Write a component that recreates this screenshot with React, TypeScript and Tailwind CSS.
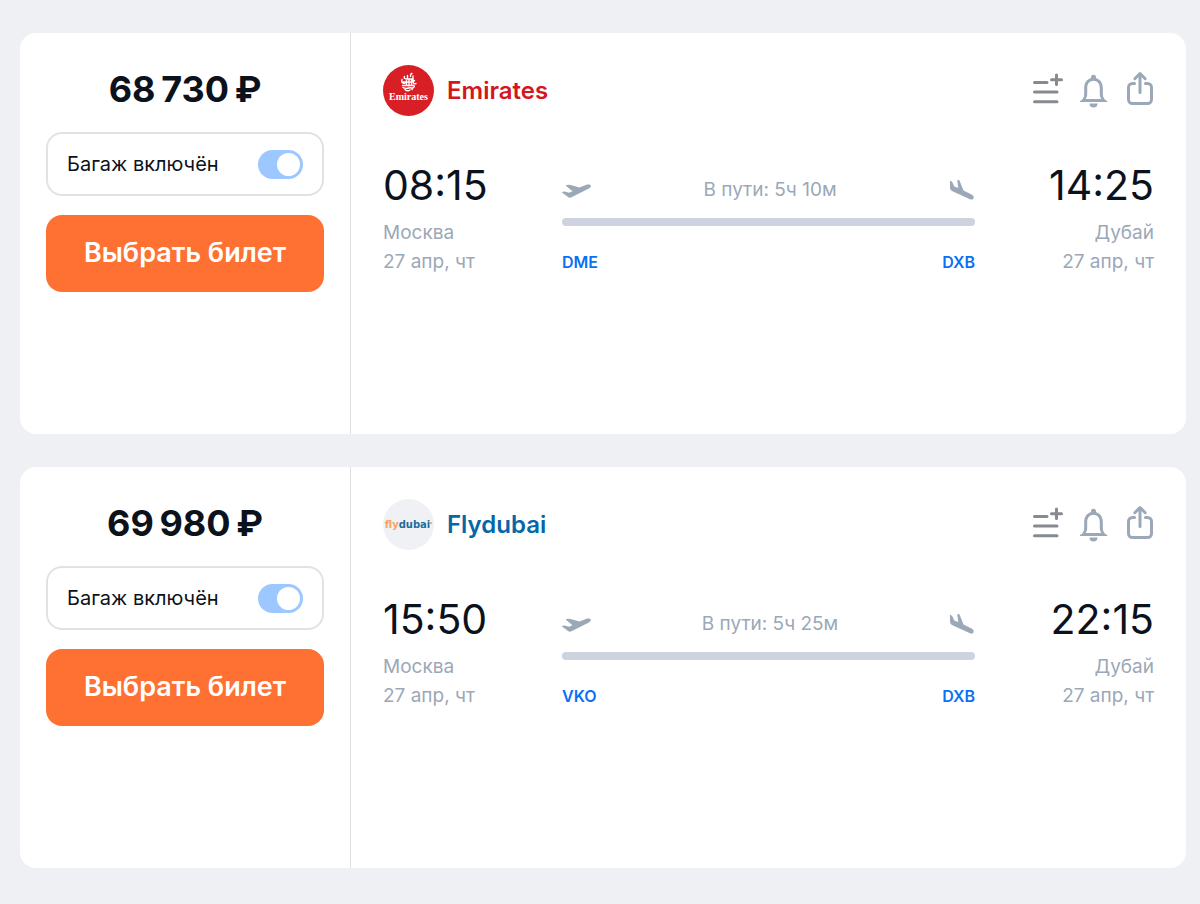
import type { ReactNode } from "react";

type Ticket = {
  id: string;
  price: string;
  airline: string;
  airlineClass: string;
  logo: ReactNode;
  duration: string;
  from: { time: string; city: string; date: string; code: string };
  to: { time: string; city: string; date: string; code: string };
};

function EmiratesLogo() {
  return (
    <span className="flex size-[51px] flex-col items-center justify-center rounded-full bg-[#d91f26] text-white">
      <svg className="h-[21px] w-5" viewBox="0 0 20 21" fill="none" stroke="currentColor" strokeWidth="1.4" strokeLinecap="round" aria-hidden="true">
        <path d="M13 2.500c-1.500 0-1.500 1.500-1.500 3M8.500 4.500v3.500M5.500 5.500c-1 2 .5 2.500 3 2.500h4.500M14 5v4c0 1.500-1.500 2-3 2H4M3 8.500c-1 3 1 4.500 3 3.500M7.500 9.500v5M10 9v6M12.500 9v5.500M15.500 9.500c-2 1.500-1.500 4 1.500 3M3.500 14.500h10.500c2 0 1.500 2-.5 2.500M4 16.500c2 1.500 4 1 6 .5s4 0 3 1.500M6 18.500c1.500 1.500 3.500 1.500 5 .5" />
      </svg>
      <span className="font-['Liberation_Serif',serif] text-[10px] font-bold leading-[10px]">Emirates</span>
      <span className="h-2" />
    </span>
  );
}

function FlydubaiLogo() {
  return (
    <span className="flex size-[51px] items-center justify-center rounded-full bg-[#eff1f5] font-['DejaVu_Sans',sans-serif] text-[10px] leading-none">
      <span className="font-bold text-[#f4a364]">fly</span>
      <span className="font-bold text-[#1d6d9b]">dubai</span>
      <span className="mb-1 size-0.5 rounded-full bg-[#f29a55]" />
    </span>
  );
}

const tickets: Ticket[] = [
  {
    id: "emirates",
    price: "68\u2009730\u2009₽",
    airline: "Emirates",
    airlineClass: "text-[#d4161d]",
    logo: <EmiratesLogo />,
    duration: "В пути: 5ч 10м",
    from: { time: "08:15", city: "Москва", date: "27 апр, чт", code: "DME" },
    to: { time: "14:25", city: "Дубай", date: "27 апр, чт", code: "DXB" },
  },
  {
    id: "flydubai",
    price: "69\u2009980\u2009₽",
    airline: "Flydubai",
    airlineClass: "text-[#0566a8]",
    logo: <FlydubaiLogo />,
    duration: "В пути: 5ч 25м",
    from: { time: "15:50", city: "Москва", date: "27 апр, чт", code: "VKO" },
    to: { time: "22:15", city: "Дубай", date: "27 апр, чт", code: "DXB" },
  },
];

function Actions() {
  return (
    <div className="flex items-center gap-4">
      <button type="button" aria-label="Добавить в список" className="text-[#868b92]">
        <svg className="h-9 w-8" viewBox="0 0 32 36" fill="none" stroke="currentColor" strokeWidth="3" strokeLinecap="round">
          <path d="M2.500 9.500H15M2.500 19H25M2.500 28.700H25M24.500 2v9.500M19.500 6.700h10" />
        </svg>
      </button>
      <button type="button" aria-label="Подписаться на цену" className="text-[#9ba8b7]">
        <svg className="h-9 w-7" viewBox="0 0 28 36" fill="currentColor">
          <path fillRule="evenodd" d="M0 29v-1c2.800-1.200 4.200-3.500 4.200-7v-6c0-6 4-10.200 9.300-10.200S22.800 9 22.800 15v6c0 3.500 1.500 5.800 4.500 7v1zM5.600 26h15.800c-1.100-1.500-1.600-3-1.600-5v-6c0-4.300-2.500-7.200-6.300-7.200S7.200 10.700 7.200 15v6c0 2-.5 3.500-1.600 5z" />
          <path d="M11 5.500V4.300a2.500 2.500 0 0 1 5 0v1.200zM9.500 30.500h8a4 4 0 0 1-8 0z" />
        </svg>
      </button>
      <button type="button" aria-label="Поделиться" className="text-[#9ba8b7]">
        <svg className="h-9 w-[30px] overflow-visible" viewBox="0 0 30 36" fill="none" stroke="currentColor" strokeWidth="3" strokeLinecap="round" strokeLinejoin="round">
          <path d="M10.500 10.500H8.500a4 4 0 0 0-4 4V26.500a4 4 0 0 0 4 4h15a4 4 0 0 0 4-4V14.500a4 4 0 0 0-4-4h-2M16 19.500V1.500M10.800 5.700 16 .5l5.200 5.200" />
        </svg>
      </button>
    </div>
  );
}

function TicketCard({ ticket }: { ticket: Ticket }) {
  const { from, to } = ticket;
  return (
    <article className="flex min-h-[401px] overflow-hidden rounded-2xl bg-white">
      <section className="w-[331px] shrink-0 border-r border-[#dddfe3] px-[26px] pt-8">
        <p className="text-center text-[36px] font-bold leading-[48px]">{ticket.price}</p>
        <label htmlFor={`baggage-${ticket.id}`} className="mt-[19px] flex h-16 items-center justify-between rounded-2xl border-2 border-[#e0e2e6] px-[19px] text-[20px]">
          Багаж включён
          <input
            id={`baggage-${ticket.id}`}
            type="checkbox"
            defaultChecked
            className="flex h-[29px] w-[45px] appearance-none items-center rounded-full bg-gray-300 px-[3px] before:size-[23px] before:rounded-full before:bg-white checked:justify-end checked:bg-[#9dc7ff]"
          />
        </label>
        <button type="button" className="mt-[19px] h-[77px] w-full rounded-2xl bg-[#ff7033] text-[27px] font-semibold text-white">
          Выбрать билет
        </button>
      </section>
      <section className="flex-1 px-8 pt-8">
        <header className="flex items-center justify-between">
          <div className="flex items-center gap-[13px]">
            {ticket.logo}
            <h2 className={`text-[24px] font-semibold ${ticket.airlineClass}`}>{ticket.airline}</h2>
          </div>
          <Actions />
        </header>
        <div className="mt-10 grid grid-cols-[179px_1fr_179px] text-[19px] leading-[29px] text-[#9ba8b7]">
          <div>
            <p className="mb-1 text-[41px] leading-[58px] text-[#0b121c]">{from.time}</p>
            <p>{from.city}</p>
            <p>{from.date}</p>
          </div>
          <div className="pt-[19px]">
            <div className="flex items-center justify-between">
              <svg className="h-6 w-[30px]" viewBox="0 -5 30 24" fill="currentColor" aria-hidden="true">
                <path d="M.3 9.800c-.4-.4-.1-.9.500-1l2-.2 4.200 1.200 3.500-1.500L4.200 2.900c-.4-.5-.2-.9.300-1l3.200-.2 9.800 2.700 7-2.600c2-.7 3.700-.4 4.200.6.5 1.200-.5 2.400-2.300 3.300L9.500 14.300c-1.200.6-2.300.5-3.100 0z" />
              </svg>
              <span>{ticket.duration}</span>
              <svg className="h-5 w-[27px]" viewBox="0 0 27 20" fill="currentColor" aria-hidden="true">
                <path d="M2 1.500C2 .8 2.600.7 3 1.100L4.500 2.500 6.200 6.500 10.300 8 9.300.8C9.200.1 10 0 10.500.1L11.500.6 15.500 10.500 23.500 14.500C25.300 15.500 26 17 25.600 18.300 25.100 19.600 23.600 19.900 22 19.200L5 11.500C3 10.500 2 9.500 2 7.500z" />
              </svg>
            </div>
            <div className="mt-[14px] h-2 rounded-full bg-[#cdd3df]" />
            <div className="mt-[22px] flex justify-between text-[16px] font-semibold text-[#0b70f4]">
              <span>{from.code}</span>
              <span>{to.code}</span>
            </div>
          </div>
          <div className="text-right">
            <p className="mb-1 text-[41px] leading-[58px] text-[#0b121c]">{to.time}</p>
            <p>{to.city}</p>
            <p>{to.date}</p>
          </div>
        </div>
      </section>
    </article>
  );
}

export default function App() {
  return (
    <main className="flex min-h-screen flex-col gap-[33px] bg-[#eff0f4] pb-9 pl-5 pr-[14px] pt-[33px] font-['Inter','Liberation_Sans',sans-serif] text-[#0b121c]">
      {tickets.map((ticket) => (
        <TicketCard key={ticket.id} ticket={ticket} />
      ))}
    </main>
  );
}
